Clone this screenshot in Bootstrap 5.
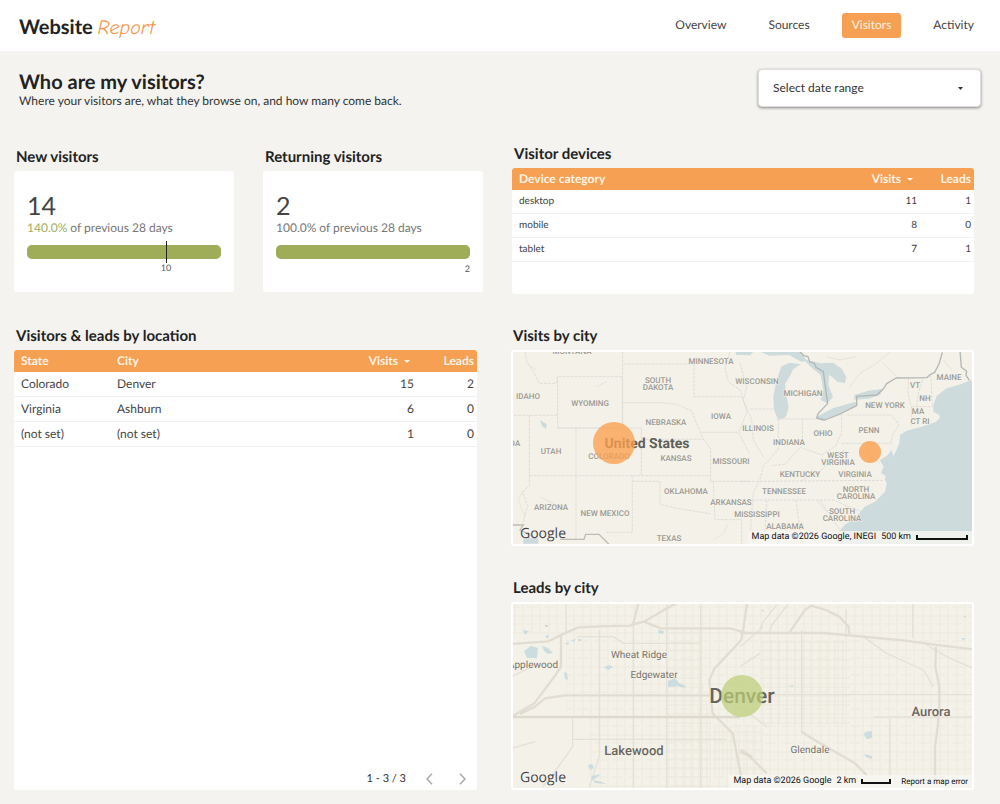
<!DOCTYPE html>
<html lang="en">
<head>
<meta charset="utf-8">
<meta name="viewport" content="width=device-width, initial-scale=1">
<title>Website Report – Visitors</title>
<link href="https://cdn.jsdelivr.net/npm/bootstrap@5.3.0/dist/css/bootstrap.min.css" rel="stylesheet">
<style>
  :root { --orange: #f5a053; --green: #9fad59; --ink: #222; --soft: #444; }
  body { font-family: Lato, sans-serif; background: #f4f3ef; color: var(--soft); font-size: 12px; text-rendering: geometricPrecision; }
  .topbar { min-height: 51px; padding: 0 16px 0 19px; }
  .brand { font-size: 20px; line-height: 24px; font-weight: 700; color: var(--ink); }
  .brand em { font-family: "Comic Neue", Lato, sans-serif; font-weight: 400; color: #f5964a; }
  .topbar .nav { column-gap: 22px; }
  .topbar .nav-link { --bs-nav-link-color: #444; font-size: 12px; line-height: 17px; padding: 3px 10px 5px; color: #444; }
  .topbar .nav-link.active { background: var(--orange); color: #fff0df; border-radius: 3px; }
  .intro { padding: 18px 19px 0; }
  .intro h1 { font-size: 20px; line-height: 24px; font-weight: 700; color: var(--ink); margin: 1px 0 0; }
  .intro p { line-height: 14px; color: #333; margin: 0; }
  .range { width: 223px; height: 38px; font-size: 12px; color: #333; border: 1px solid #ddd; border-radius: 4px; padding: 0 14px;
    box-shadow: 0 1px 3px rgba(0,0,0,.45);
    background: #fff url("data:image/svg+xml,%3Csvg xmlns='http://www.w3.org/2000/svg' viewBox='0 0 5 3'%3E%3Cpath d='M0 0h5L2.500 3z' fill='%23333'/%3E%3C/svg%3E") no-repeat right 17px center / 5px 3px; }
  .board { padding: 33px 26px 14px 14px; display: grid; row-gap: 29px; }
  .top-row { display: grid; grid-template-columns: 220fr 220fr 462fr; column-gap: 29px; align-items: start; }
  .top-row .drop { padding-top: 3px; }
  .main-row { display: grid; grid-template-columns: 1fr 1fr; column-gap: 34px; }
  .maps { display: grid; row-gap: 29px; align-content: start; }
  .title { font-size: 15px; line-height: 27px; font-weight: 700; color: var(--ink); margin: 0; padding: 0 0 0 2px; }
  .panel { background: #fff; border-radius: 3px; overflow: hidden; }
  .score { height: 121px; padding: 20px 13px 0; }
  .score .value { font-size: 25px; line-height: 30px; }
  .score .compare { font-size: 12px; line-height: 14px; color: #777; }
  .score .compare b { font-weight: 400; color: var(--green); }
  .meter { margin-top: 10px; height: 14px; position: relative; }
  .meter .progress { height: 14px; border-radius: 5px; --bs-progress-bar-bg: #9fad59; }
  .tick { position: absolute; top: -4px; width: 1px; height: 22px; background: #222; }
  .tick span { position: absolute; top: 21px; left: -10px; width: 21px; text-align: center; }
  .tick span, .meter-end { font-size: 9px; line-height: 11px; color: #555; }
  .meter-end { text-align: right; padding-top: 4px; }
  .report { table-layout: fixed; margin: 0; border-collapse: separate; border-spacing: 0; --bs-table-bg: transparent; color: var(--soft); width: 100%; }
  .report th, .report td { padding: 0 3px 0 7px; vertical-align: middle; }
  .report th { background: var(--orange); color: #fff4e6; font-size: 12px; line-height: 22px; font-weight: 700; }
  .report td { line-height: 24px; border-bottom: 1px solid #f1f1f1; font-size: 12px; }
  .devices td { font-size: 10px; line-height: 23px; }
  .c-state { width: 96px; } .c-visits { width: 100px; } .c-leads { width: 60px; }
  .devices .c-leads { width: 54px; }
  .sort { display: inline-block; border: 3px solid transparent; border-top-color: #fff4e6; border-bottom: 0; margin: 0 4px 2px 3px; }
  .devices-panel { height: 126px; }
  .pager { margin-top: auto; padding: 0 5px 3px; column-gap: 14px; color: #333; font-size: 11px; }
  .pager button { border: 0; background: none; padding: 0; width: 19px; height: 16px; display: flex; align-items: center; justify-content: center; }
  .map { border: 2px solid #fff; position: relative; background: #f3f1e8; }
  .map > svg { display: block; width: 100%; height: auto; }
  .map text { font-family: Roboto, sans-serif; text-anchor: middle; fill: #9b9993; font-size: 8px; font-weight: 500; paint-order: stroke; stroke: #f5f3ea; stroke-width: 1px; }
  .map text.town { fill: #77736c; font-size: 10px; font-weight: 400; }
  .map text.city { fill: #6a665f; font-size: 13px; }
  .map text.big { fill: #5f5e59; font-size: 14px; font-weight: 700; }
  .map text.huge { fill: #68655e; font-size: 21px; }
  .credit { position: absolute; right: 0; bottom: 0; background: rgba(247,246,241,.8); font: 9px/13px Roboto, sans-serif; color: #111; padding: 0 4px; column-gap: 5px; }
  .credit a { color: #111; text-decoration: none; font-size: 8px; margin-left: 5px; }
  .scale { border: solid #111; border-width: 0 2px 2px; height: 5px; width: 52px; }
  .scale.short { width: 30px; }
  .glogo { position: absolute; left: 7px; bottom: 1px; font: 500 14px/19px "Open Sans", sans-serif; color: #444; text-shadow: 0 0 2px #fff; }
</style>
</head>
<body>
<header class="topbar bg-white d-flex align-items-center justify-content-between">
  <a class="brand text-decoration-none pt-1" href="#">Website <em>Report</em></a>
  <nav class="nav" aria-label="Report pages">
    <a class="nav-link" href="#">Overview</a>
    <a class="nav-link" href="#">Sources</a>
    <a class="nav-link active" aria-current="page" href="#">Visitors</a>
    <a class="nav-link" href="#">Activity</a>
  </nav>
</header>

<div class="intro d-flex justify-content-between">
  <div>
    <h1>Who are my visitors?</h1>
    <p>Where your visitors are, what they browse on, and how many come back.</p>
  </div>
  <select class="form-select range" aria-label="Date range"><option>Select date range</option></select>
</div>

<main class="board">
  <div class="top-row">
    <section class="drop">
      <h2 class="title">New visitors</h2>
      <div class="panel score">
        <div class="value">14</div>
        <div class="compare"><b>140.0%</b> of previous 28 days</div>
        <div class="meter">
          <div class="progress"><div class="progress-bar w-100"></div></div>
          <div class="tick" style="left:71.4%"><span>10</span></div>
        </div>
      </div>
    </section>
    <section class="drop">
      <h2 class="title">Returning visitors</h2>
      <div class="panel score">
        <div class="value">2</div>
        <div class="compare">100.0% of previous 28 days</div>
        <div class="meter"><div class="progress"><div class="progress-bar w-100"></div></div></div>
        <div class="meter-end">2</div>
      </div>
    </section>
    <section>
      <h2 class="title">Visitor devices</h2>
      <div class="panel devices-panel">
        <table class="report devices">
          <colgroup><col><col class="c-visits"><col class="c-leads"></colgroup>
          <thead><tr><th>Device category</th><th class="text-end">Visits <span class="sort"></span></th><th class="text-end">Leads</th></tr></thead>
          <tbody>
            <tr><td>desktop</td><td class="text-end">11</td><td class="text-end">1</td></tr>
            <tr><td>mobile</td><td class="text-end">8</td><td class="text-end">0</td></tr>
            <tr><td>tablet</td><td class="text-end">7</td><td class="text-end">1</td></tr>
          </tbody>
        </table>
      </div>
    </section>
  </div>

  <div class="main-row">
    <section class="d-flex flex-column">
      <h2 class="title">Visitors &amp; leads by location</h2>
      <div class="panel d-flex flex-column flex-grow-1">
        <table class="report">
          <colgroup><col class="c-state"><col><col class="c-visits"><col class="c-leads"></colgroup>
          <thead><tr><th>State</th><th>City</th><th class="text-end">Visits <span class="sort"></span></th><th class="text-end">Leads</th></tr></thead>
          <tbody>
            <tr><td>Colorado</td><td>Denver</td><td class="text-end">15</td><td class="text-end">2</td></tr>
            <tr><td>Virginia</td><td>Ashburn</td><td class="text-end">6</td><td class="text-end">0</td></tr>
            <tr><td>(not set)</td><td>(not set)</td><td class="text-end">1</td><td class="text-end">0</td></tr>
          </tbody>
        </table>
        <div class="pager d-flex justify-content-end align-items-center">
          <span>1 - 3 / 3</span>
          <button type="button" aria-label="Previous page"><svg width="7" height="12" viewBox="0 0 7 12" fill="none" stroke="#aaa" stroke-width="1.500"><path d="M6 .8L1 6l5 5.200"/></svg></button>
          <button type="button" aria-label="Next page"><svg width="7" height="12" viewBox="0 0 7 12" fill="none" stroke="#aaa" stroke-width="1.500"><path d="M1 .8L6 6l-5 5.200"/></svg></button>
        </div>
      </div>
    </section>

    <div class="maps">
      <section>
        <h2 class="title">Visits by city</h2>
        <div class="panel map">
          <svg viewBox="513 352 459 192" role="img" aria-label="Map of visits in the United States">
            <rect x="513" y="352" width="459" height="192" fill="#f3f1e8"/>
            <!-- western states -->
            <g transform="translate(500 320) scale(.333333)" fill="none" stroke="#dfddd7" stroke-width="3">
              <g stroke-dasharray="9 3">
                <path d="M75 95l5 30 20 30 18 35 50 0 5-20H367V324H173V170M30 286H173M88 286V467M88 467H632M228 324V660M173 324H424V467M397 467V637H318M397 484H480V553l50 12 50 8 52 8M368 95V324M371 132H582M367 248H480l50 5 45 20 20 50 15 35M424 358H612l20 30V484M582 132V230H726l15 45-20 50-5 12H603M690 95l-15 50 10 40 35 25 10 25M716 337l30 60M632 484H750M640 484l5 115h80v74M88 467v30l-20 20 15 40-15 55"/>
              </g>
              <path d="M35 615h35l-10 15 40 20M180 658h72l5-15h40l38 38" stroke="#bebcb6" stroke-width="4"/>
              <path d="M120 300l20 12-2 15-12-8zM70 655h45v16H70zM705 95l45 2v8h-40z" fill="#cddbdd" stroke="none"/>
              <path d="M80 130l30 20M290 200l30-15M120 530l40 20M640 660l30-20 15-30M70 510l-15 30 20 50" stroke="#e6e4dc"/>
            </g>
            <!-- eastern states, Great Lakes and the Atlantic -->
            <g transform="translate(740 320) scale(.333333)">
              <g fill="#cddbdd">
                <path d="M700 180l-20 5-24 10-36 10-30 23-10 27v20l18 10 2 8-12 13-43 14-45 12-20 13-2 25-13 30-25 40-5 40 5 10-5 25-30 30-32 16-23 29-35 24-27 30v40h410z"/>
                <path d="M150 128l32 5-22 14-10 20-15 25 5 38 6 32-9 30-22 8-13-30-2-40 8-42 10-32 7-18z"/>
                <path d="M0 95h40l-10 12zM60 95h118l25 28-20 2-35-20-60 2z"/>
                <path d="M190 118l50 12 40-2 25 18 14 25-4 18-23-4-15-14-10-6-2 30 14 36-17 19-20-10 8-30-8-45-30-25z"/>
                <path d="M228 292l50-27 68-20 6 10-55 30-52 18zM343 225l42-13 41-5-5 17-36 12-42 3z"/>
                <path d="M420 420l20-12 15-18 5 18-25 60-12-10 8-18z"/>
              </g>
              <g fill="none" stroke="#dfddd7" stroke-width="3" stroke-dasharray="9 3">
                <path d="M30 267h70M110 297H235M115 297v90l-25 30-20 20-10 40-20 40-10 130M187 297v80l-30 30-20 25-40 5M0 130l20 70-10 40 25 60 5 60 30 50M305 280v60l-20 40-40 25-55-20M305 370H450M320 285H455l22 30-20 30-5 30M505 175v50l10 40v50M515 260h65M550 170l-15 50-5 40M572 165l5 90M0 484h50l380-3M0 540H280l45 20 40 15M180 484l60-30 45-45 30-20M80 540l-5 100M168 540l15 110M240 540l60 90M380 370l10 40 30 20"/>
              </g>
              <g fill="none" stroke="#e4e3dc" stroke-width="3"><path d="M260 110l40 10 50-10M330 200l30-40 50-30 40-35M610 120l25 30M430 130l40 40M230 540l30 35"/></g>
              <g fill="none" stroke="#b5b7b5" stroke-width="4" stroke-linejoin="round">
                <path d="M180 95l12 12 12 3 5 15 14 5 5 12 22 13 8 60 5 35-28 30-5 14 25 6 45-18 50-25v-28l60-4 20-18 10-16 28-17 92-1 12-10 12-6 13-25 10-35M660 92l4 50 16 12-2 12 10 15"/>
              </g>
            </g>
            <text x="572" y="354">MONTANA</text><text x="528" y="399">IDAHO</text><text x="590" y="406">WYOMING</text>
            <text x="658" y="383">SOUTH</text><text x="658" y="390">DAKOTA</text><text x="711" y="364">MINNESOTA</text>
            <text x="666" y="425">NEBRASKA</text><text x="721" y="419">IOWA</text><text x="551" y="454">UTAH</text><text x="515" y="446">DA</text>
            <text x="609" y="459">COLORADO</text><text x="676" y="461">KANSAS</text><text x="731" y="464">MISSOURI</text>
            <text x="686" y="494">OKLAHOMA</text><text x="731" y="505">ARKANSAS</text><text x="551" y="510">ARIZONA</text>
            <text x="605" y="516">NEW MEXICO</text><text x="669" y="541">TEXAS</text><text x="757" y="517">MISSISSIPPI</text>
            <text x="757" y="384">WISCONSIN</text><text x="803" y="396">MICHIGAN</text><text x="758" y="431">ILLINOIS</text><text x="789" y="445">INDIANA</text>
            <text x="823" y="436">OHIO</text><text x="869" y="433">PENN</text><text x="885" y="408">NEW YORK</text><text x="949" y="380">MAINE</text>
            <text x="915" y="388">VT</text><text x="925" y="401">NH</text><text x="918" y="414">MA</text><text x="920" y="424">CT RI</text>
            <text x="838" y="458">WEST</text><text x="838" y="465">VIRGINIA</text><text x="800" y="477">KENTUCKY</text><text x="855" y="477">VIRGINIA</text>
            <text x="784" y="494">TENNESSEE</text><text x="856" y="492">NORTH</text><text x="856" y="499">CAROLINA</text>
            <text x="842" y="514">SOUTH</text><text x="842" y="521">CAROLINA</text><text x="785" y="529">ALABAMA</text>
            <text x="647" y="448" class="big">United States</text>
            <circle cx="614" cy="443" r="21" fill="#fba04f" fill-opacity=".78"/>
            <circle cx="870" cy="452" r="11" fill="#fba04f" fill-opacity=".82"/>
          </svg>
          <span class="glogo">Google</span>
          <div class="credit d-flex align-items-center"><span>Map data ©2026 Google, INEGI</span><span>500 km</span><span class="scale"></span></div>
        </div>
      </section>

      <section>
        <h2 class="title">Leads by city</h2>
        <div class="panel map">
          <svg viewBox="513 604 459 184" role="img" aria-label="Map of leads around Denver">
            <defs>
              <pattern id="blocks" width="17" height="17" patternUnits="userSpaceOnUse"><path d="M0 4h17M0 12h11M5 0v17M13 0v17" fill="none" stroke="#edeadf" stroke-width="1"/></pattern>
              <pattern id="dense" width="8" height="9" patternUnits="userSpaceOnUse"><path d="M0 3h8M3 0v9" fill="none" stroke="#ebe7dc" stroke-width="1"/></pattern>
            </defs>
            <rect x="513" y="604" width="459" height="184" fill="#f3f1e8"/>
            <path d="M566 604h406v184H588v-70h-22zM513 604h50v30h-50z" fill="url(#blocks)"/>
            <path d="M668 628h34v50l8 40v70h-42zM760 640h90v85h-90zM713 725h50v50h-50z" fill="url(#dense)"/>
            <g transform="translate(500 570) scale(.333333)" fill="none" stroke="#e4e1d7" stroke-width="4" stroke-linejoin="round">
              <path d="M198 95v90M298 180V560l-30 90M400 160V655M500 95V655M602 95V655M218 445v85l-50 70-40 50M35 320l60-30 60-10M220 508H680M230 200h110l30 20h230M35 535l70-20"/>
              <g stroke="#e1ddd2" stroke-width="7">
                <path d="M35 222l110-8 40-20 50-22 65-3 90-2 20-7 22-5 50 20H690l45 12M400 160l15-60M432 155l60-35 45-25M183 195v95l-20 30-60 80-68 40M60 432l45-22 30-25 60-9H640M35 441H720M742 95l-12 80-6 35-80 85-16 35 10 100 30 30 30 30 12 60 10 50 10 50M722 540l35 20"/>
              </g>
              <path d="M35 441H720" stroke="#dbd7cb" stroke-width="5"/>
            </g>
            <g transform="translate(740 570) scale(.333333)" fill="none" stroke="#e4e1d7" stroke-width="4" stroke-linejoin="round">
              <path d="M185 180V490M90 185l5-20 55-70M60 175l10-20 40-50M318 120v70M518 95v110M0 374H700M400 441H700M450 445V650M370 200l70 50 110 50 30 50M560 225l70 40 70 30M0 230l70-60M0 290l60-40M0 410l80 60"/>
              <g stroke="#e1ddd2" stroke-width="7">
                <path d="M0 189H250l130 12 110 10 110 15 100 12M150 185l45-65 18-13 45 13 40 20 28 30 2 22M588 230l-2 60 12 60v60l-5 60-8 60v110M185 485l30 20 70 40 60 35 35 35M0 545l30 15 50 50"/>
              </g>
            </g>
            <g fill="#cbdde0">
              <path d="M524 651l7-5 7 2-1 10h-10zM542 646l6 2 5 5-5 1-4-3zM523 630l6 1-4 4zM545 625h3v2h-3zM545 636l4-1-1 4zM565 643l4-1-1 3zM571 640l5-1-2 3zM578 639h3v2h-3zM604 667l5-2 4 2-5 3zM564 672l3 1 1 7-3-1zM668 681l7-3 4 5 7 3-2 2-6-2-10 1zM659 630l5 1-1 3-5-1zM588 765l4-1 2 4-4 2zM592 776l9-2-8 6 9 2 4 2-11-1-4-5z"/>
              <path d="M865 732l7-1v7l-5 1-3-4zM864 754l8 2v3l-6-2zM788 686l5-1v2zM961 638h4l-1 3zM963 616h3v2zM761 610h3v2z"/>
            </g>
            <text x="533" y="668" class="town">Applewood</text>
            <text x="639" y="658" class="town">Wheat Ridge</text>
            <text x="654" y="678" class="town">Edgewater</text>
            <text x="810" y="753" class="town">Glendale</text>
            <text x="634" y="755" class="city">Lakewood</text>
            <text x="931" y="716" class="city">Aurora</text>
            <text x="742" y="703" class="huge">Denver</text>
            <circle cx="742" cy="696" r="21" fill="#bdce79" fill-opacity=".72"/>
          </svg>
          <span class="glogo">Google</span>
          <div class="credit d-flex align-items-center"><span>Map data ©2026 Google</span><span>2 km</span><span class="scale short"></span><a href="#">Report a map error</a></div>
        </div>
      </section>
    </div>
  </div>
</main>
<script src="https://cdn.jsdelivr.net/npm/bootstrap@5.3.0/dist/js/bootstrap.bundle.min.js"></script>
</body>
</html>
